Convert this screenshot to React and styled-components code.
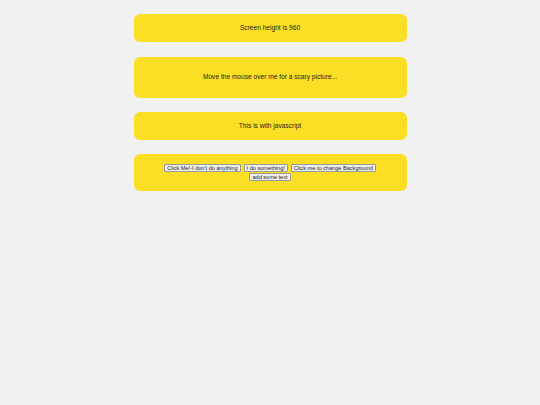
import React from "react";
import styled, { createGlobalStyle } from "styled-components";

const Global = createGlobalStyle`
  html, body { margin: 0; padding: 0; background: #f1f1f1; }
  body { font-family: "Liberation Sans", Arial, sans-serif; }
`;

const Page = styled.div`
  display: flex;
  flex-direction: column;
  align-items: center;
  gap: 14.5px;
  padding-top: 13.5px;
`;

const Card = styled.div`
  width: 273px;
  box-sizing: border-box;
  height: ${(p) => p.$h}px;
  background: #fbdf24;
  border-radius: 6px;
  display: flex;
  flex-direction: column;
  align-items: center;
  justify-content: center;
  color: #1e1e1e;
  font-size: 6.6px;
  line-height: 8px;
`;

const ButtonRow = styled.div`
  display: flex;
  flex-wrap: wrap;
  justify-content: center;
  gap: 1px 3px;
  width: 220px;
`;

const Btn = styled.button`
  font-family: "Liberation Sans", Arial, sans-serif;
  font-size: 5.6px;
  line-height: 6px;
  height: 8px;
  padding: 0 2px;
  margin: 0;
  border: 1px solid #9a9a9a;
  border-radius: 1px;
  background: #efefef;
  color: #1e1e1e;
`;

export default function App() {
  return (
    <>
      <Global />
      <Page>
        <Card $h={28.5}>Screen height is 960</Card>
        <Card $h={41}>Move the mouse over me for a scary picture...</Card>
        <Card $h={27.5}>This is with javascript</Card>
        <Card $h={37}>
          <ButtonRow>
            <Btn>Click Me!-I don't do anything</Btn>
            <Btn>I do something!</Btn>
            <Btn>Click me to change Background</Btn>
            <Btn>add some text</Btn>
          </ButtonRow>
        </Card>
      </Page>
    </>
  );
}
